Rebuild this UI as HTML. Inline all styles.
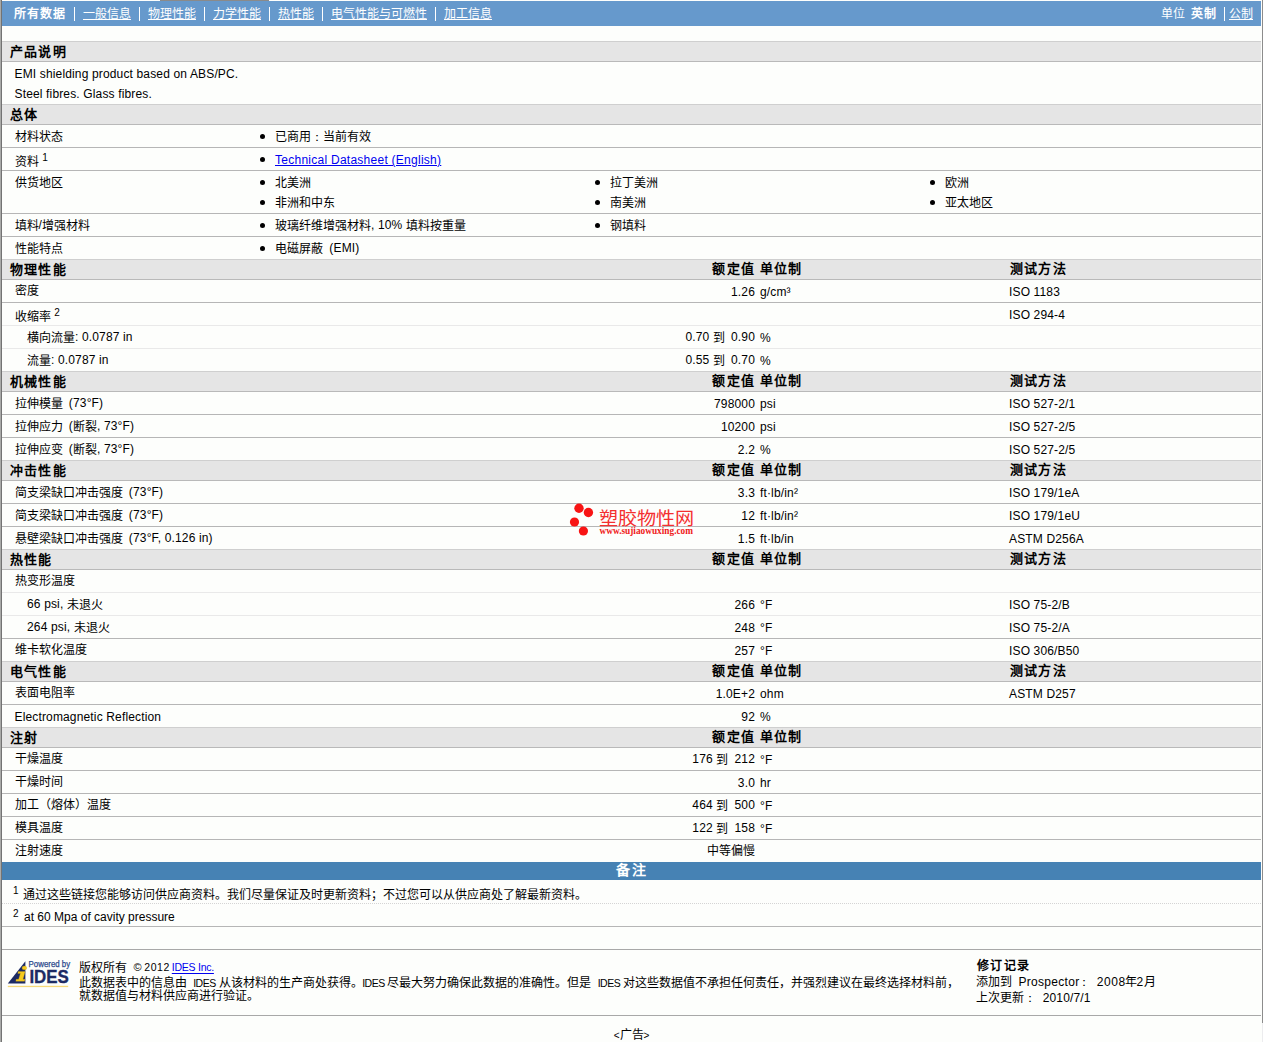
<!DOCTYPE html>
<html lang="zh-CN"><head><meta charset="utf-8"><title>Datasheet</title>
<style>
html,body{margin:0;padding:0}
body{width:1263px;height:1042px;background:#fdfefc;position:relative;overflow:hidden;font-family:"Liberation Sans",sans-serif;font-size:12px;color:#000}
div,span,a{box-sizing:border-box}
.abs{position:absolute}
#lb0{left:0;top:0;width:1px;height:1042px;background:#a9aaa8}
#lb1{left:1px;top:0;width:1px;height:1042px;background:#737373}
#rb{left:1262px;top:0;width:1px;height:1023px;background:#8c8c8c}
#rb2{left:1262px;top:1023px;width:1px;height:19px;background:#ececee}
#tg{left:160px;top:0;width:109px;height:1px;background:#8a8a8a}
#nav{left:2px;top:1px;width:1259px;height:25px;background:#6699cc;color:#fff;line-height:27px;white-space:nowrap}
#nav span,#nav a{position:absolute;top:0;color:#fff}
#nav a{text-decoration:underline}
#nav b{font-weight:bold;letter-spacing:1px}
#nav u{position:absolute;top:6px;width:1px;height:14px;background:#fff}
.h{position:absolute;left:2px;width:1259px;height:21px;background:#e5e5e5;border-top:1px solid #cfcfcf;border-bottom:1px solid #b9b9b9;line-height:19px;font-size:13px;font-weight:bold;white-space:nowrap}
.h span{position:absolute;top:0;letter-spacing:1.2px}
.h .l{left:8px}
.h .v{left:0;width:753px;text-align:right;top:-1px}
.h .u{left:758px;top:-1px}
.h .t{left:1008px;top:-1px}
.r{position:absolute;left:2px;width:1259px;height:23px;border-bottom:1px solid #b6b6b6;line-height:25px;white-space:nowrap}
.r.s{border-bottom-color:#e9e9e9}
.r.n{border-bottom:none;height:22px}
.r span,.r a{position:absolute;top:0}
.r .l{left:12.5px}
.r .l2{left:25px}
.r .v{left:0;width:753px;text-align:right}
.r .u{left:758px}
.r .t{left:1007px}
.r em{font-style:normal;position:relative;top:-1px;letter-spacing:.15px}
.r .e{letter-spacing:.15px}
.r s{display:inline-block;width:3px;text-decoration:none}
.r i{position:absolute;width:5px;height:5px;border-radius:50%;background:#000;top:9px}
sup{font-size:10px;margin-left:0.5px;vertical-align:baseline;position:relative;top:-5px;line-height:0;letter-spacing:0}
.f{position:absolute;line-height:14px;white-space:nowrap}
a{color:#0000f0;text-decoration:underline}
</style></head>
<body>
<div class="abs" id="lb0"></div><div class="abs" id="lb1"></div><div class="abs" id="rb"></div><div class="abs" id="rb2"></div><div class="abs" id="tg"></div>
<div class="abs" id="nav">
<span style="left:12px"><b>所有数据</b></span>
<u style="left:72px"></u>
<a style="left:81px">一般信息</a>
<u style="left:137px"></u>
<a style="left:146px">物理性能</a>
<u style="left:202px"></u>
<a style="left:211px">力学性能</a>
<u style="left:267px"></u>
<a style="left:276px">热性能</a>
<u style="left:320px"></u>
<a style="left:329px">电气性能与可燃性</a>
<u style="left:433px"></u>
<a style="left:442px">加工信息</a>
<span style="left:1159px">单位</span>
<span style="left:1189px"><b>英制</b></span>
<u style="left:1222px"></u>
<a style="left:1227px">公制</a>
</div>
<div class="h" style="top:41px"><span class="l">产品说明</span></div>
<div class="r n" style="top:62px;height:42px;line-height:20px"><span class="l e" style="top:2px">EMI shielding product based on ABS/PC.</span><span class="l e" style="top:22px">Steel fibres. Glass fibres.</span></div>
<div class="h" style="top:104px"><span class="l">总体</span></div>
<div class="r" style="top:125px"><span class="l">材料状态</span><i style="left:258px;top:9px"></i><span style="left:273px;top:0px">已商用<bdi lang="ja">：</bdi>当前有效</span></div>
<div class="r" style="top:148px"><span class="l" style="top:2px">资料 <sup>1</sup></span><i style="left:258px;top:9px"></i><span style="left:273px;top:0px"><a style="position:static;letter-spacing:0.26px">Technical Datasheet (English)</a></span></div>
<div class="r" style="top:171px;height:43px"><span class="l">供货地区</span><i style="left:258px;top:9px"></i><span style="left:273px;top:0px">北美洲</span><i style="left:593px;top:9px"></i><span style="left:608px;top:0px">拉丁美洲</span><i style="left:928px;top:9px"></i><span style="left:943px;top:0px">欧洲</span><i style="left:258px;top:29px"></i><span style="left:273px;top:20px">非洲和中东</span><i style="left:593px;top:29px"></i><span style="left:608px;top:20px">南美洲</span><i style="left:928px;top:29px"></i><span style="left:943px;top:20px">亚太地区</span></div>
<div class="r" style="top:214px"><span class="l">填料<em>/</em>增强材料</span><i style="left:258px;top:9px"></i><span style="left:273px;top:0px">玻璃纤维增强材料<em>, 10%</em> 填料按重量</span><i style="left:593px;top:9px"></i><span style="left:608px;top:0px">钢填料</span></div>
<div class="r n" style="top:237px"><span class="l">性能特点</span><i style="left:258px;top:9px"></i><span style="left:273px;top:0px">电磁屏蔽<s></s> <em>(EMI)</em></span></div>
<div class="h" style="top:259px"><span class="l">物理性能</span><span class="v">额定值</span><span class="u">单位制</span><span class="t">测试方法</span></div>
<div class="r" style="top:280px"><span class="l" style="top:-1px">密度</span><span class="v e">1.26</span><span class="u e">g/cm³</span><span class="t e">ISO 1183</span></div>
<div class="r s" style="top:303px"><span class="l"><span style="position:relative;top:2px">收缩率 <sup>2</sup></span></span><span class="t e">ISO 294-4</span></div>
<div class="r s" style="top:326px"><span class="l2">横向流量<em>: 0.0787 in</em></span><span class="v"><em>0.70</em> 到<s></s> <em>0.90</em></span><span class="u e">%</span></div>
<div class="r n" style="top:349px"><span class="l2">流量<em>: 0.0787 in</em></span><span class="v"><em>0.55</em> 到<s></s> <em>0.70</em></span><span class="u e">%</span></div>
<div class="h" style="top:371px"><span class="l">机械性能</span><span class="v">额定值</span><span class="u">单位制</span><span class="t">测试方法</span></div>
<div class="r" style="top:392px"><span class="l">拉伸模量<s></s> <em>(73°F)</em></span><span class="v e">798000</span><span class="u e">psi</span><span class="t e">ISO 527-2/1</span></div>
<div class="r" style="top:415px"><span class="l">拉伸应力<s></s> <em>(</em>断裂<em>, 73°F)</em></span><span class="v e">10200</span><span class="u e">psi</span><span class="t e">ISO 527-2/5</span></div>
<div class="r n" style="top:438px"><span class="l">拉伸应变<s></s> <em>(</em>断裂<em>, 73°F)</em></span><span class="v e">2.2</span><span class="u e">%</span><span class="t e">ISO 527-2/5</span></div>
<div class="h" style="top:460px"><span class="l">冲击性能</span><span class="v">额定值</span><span class="u">单位制</span><span class="t">测试方法</span></div>
<div class="r" style="top:481px"><span class="l">简支梁缺口冲击强度<s></s> <em>(73°F)</em></span><span class="v e">3.3</span><span class="u e">ft·lb/in²</span><span class="t e">ISO 179/1eA</span></div>
<div class="r" style="top:504px"><span class="l">简支梁缺口冲击强度<s></s> <em>(73°F)</em></span><span class="v e">12</span><span class="u e">ft·lb/in²</span><span class="t e">ISO 179/1eU</span></div>
<div class="r n" style="top:527px"><span class="l">悬壁梁缺口冲击强度<s></s> <em>(73°F, 0.126 in)</em></span><span class="v e">1.5</span><span class="u e">ft·lb/in</span><span class="t e">ASTM D256A</span></div>
<div class="h" style="top:549px"><span class="l">热性能</span><span class="v">额定值</span><span class="u">单位制</span><span class="t">测试方法</span></div>
<div class="r s" style="top:570px"><span class="l" style="top:-1px">热变形温度</span></div>
<div class="r s" style="top:593px"><span class="l2"><em>66 psi,</em> 未退火</span><span class="v e">266</span><span class="u e">°F</span><span class="t e">ISO 75-2/B</span></div>
<div class="r" style="top:616px"><span class="l2"><em>264 psi,</em> 未退火</span><span class="v e">248</span><span class="u e">°F</span><span class="t e">ISO 75-2/A</span></div>
<div class="r n" style="top:639px"><span class="l" style="top:-1px">维卡软化温度</span><span class="v e">257</span><span class="u e">°F</span><span class="t e">ISO 306/B50</span></div>
<div class="h" style="top:661px"><span class="l">电气性能</span><span class="v">额定值</span><span class="u">单位制</span><span class="t">测试方法</span></div>
<div class="r" style="top:682px"><span class="l" style="top:-1px">表面电阻率</span><span class="v e">1.0E+2</span><span class="u e">ohm</span><span class="t e">ASTM D257</span></div>
<div class="r n" style="top:705px"><span class="l e">Electromagnetic Reflection</span><span class="v e">92</span><span class="u e">%</span></div>
<div class="h" style="top:727px"><span class="l">注射</span><span class="v">额定值</span><span class="u">单位制</span></div>
<div class="r" style="top:748px"><span class="l" style="top:-1px">干燥温度</span><span class="v"><em>176</em> 到<s></s> <em>212</em></span><span class="u e">°F</span></div>
<div class="r" style="top:771px"><span class="l" style="top:-1px">干燥时间</span><span class="v e">3.0</span><span class="u e">hr</span></div>
<div class="r" style="top:794px"><span class="l" style="top:-1px">加工（熔体）温度</span><span class="v"><em>464</em> 到<s></s> <em>500</em></span><span class="u e">°F</span></div>
<div class="r" style="top:817px"><span class="l" style="top:-1px">模具温度</span><span class="v"><em>122</em> 到<s></s> <em>158</em></span><span class="u e">°F</span></div>
<div class="r n" style="top:840px"><span class="l" style="top:-1px">注射速度</span><span class="v" style="top:-1px">中等偏慢</span></div>
<div class="abs" style="left:2px;top:862px;width:1259px;height:18px;background:#4682b4;color:#fff;font-weight:bold;font-size:14px;line-height:16px;letter-spacing:1.5px;text-align:center">备注</div>
<div class="abs" style="left:2px;top:903px;width:1259px;height:1px;border-top:1px dotted #d4d4d4"></div>
<div class="abs" style="left:2px;top:926px;width:1259px;height:1px;background:#b6b6b6"></div>
<div class="f" style="left:13px;top:884px;font-size:10px">1</div>
<div class="f" style="left:22.5px;top:888px;">通过这些链接您能够访问供应商资料。我们尽量保证及时更新资料；不过您可以从供应商处了解最新资料。</div>
<div class="f" style="left:13px;top:907px;font-size:10px">2</div>
<div class="f" style="left:24px;top:910px;">at 60 Mpa of cavity pressure</div>
<div class="abs" style="left:2px;top:949px;width:1259px;height:1px;background:#a8a8a8"></div>
<div class="abs" style="left:2px;top:1015px;width:1259px;height:1px;background:#a8a8a8"></div>
<svg class="abs" style="left:6px;top:958px" width="68" height="32" viewBox="6 958 68 32">
<polygon points="7.8,983.6 25.4,961.2 25.4,983.6" fill="#1c2a63"/>
<text x="28.6" y="967" font-family="Liberation Sans, sans-serif" font-size="9" fill="#2b4a8c" stroke="#2b4a8c" stroke-width="0.25" textLength="41.6" lengthAdjust="spacingAndGlyphs">Powered by</text>
<text x="29.4" y="983.3" font-family="Liberation Sans, sans-serif" font-size="19" font-weight="bold" fill="#1c2a63" stroke="#1c2a63" stroke-width="0.35" textLength="39.4" lengthAdjust="spacingAndGlyphs">IDES</text>
<path d="M18.2 971.6 L25.2 971.6 L23 979.3 L25 979.3 L24.6 981.2 L15.8 981.2 L16.2 979.3 L18.6 979.3 L20.4 973.4 L17.8 973.4 Z" fill="#f6cb1e" stroke="#c99a10" stroke-width="0.3"/>
<ellipse cx="24.4" cy="967.9" rx="2.4" ry="1.9" fill="#f6cb1e" stroke="#c99a10" stroke-width="0.3"/>
<rect x="7.8" y="985.8" width="60.4" height="1.3" fill="#f6d978"/>
</svg>
<div class="f" style="left:79px;top:961px;">版权所有</div>
<div class="f" style="left:133.4px;top:960px;font-size:11px">©</div>
<div class="f" style="left:144.3px;top:960px;font-size:10.5px;letter-spacing:0.55px">2012</div>
<div class="f" style="left:171.8px;top:960px;font-size:10.5px;letter-spacing:-0.25px;color:#0000f0;text-decoration:underline;text-underline-offset:2px">IDES Inc.</div>
<div class="f" style="left:79px;top:976px;">此数据表中的信息由</div>
<div class="f" style="left:193.2px;top:976px;font-size:10.5px;letter-spacing:-0.5px">IDES</div>
<div class="f" style="left:218.7px;top:976px;">从该材料的生产商处获得。</div>
<div class="f" style="left:362.2px;top:976px;font-size:10.5px;letter-spacing:-0.5px">IDES</div>
<div class="f" style="left:387.4px;top:976px;">尽最大努力确保此数据的准确性。</div>
<div class="f" style="left:567px;top:976px;">但是</div>
<div class="f" style="left:597.7px;top:976px;font-size:10.5px;letter-spacing:-0.5px">IDES</div>
<div class="f" style="left:623px;top:976px;">对这些数据值不承担任何责任，并强烈建议在最终选择材料前，</div>
<div class="f" style="left:79px;top:989px;">就数据值与材料供应商进行验证。</div>
<div class="f" style="left:976.8px;top:959px;font-weight:bold;letter-spacing:1.5px">修订记录</div>
<div class="f" style="left:976.3px;top:975px;">添加到</div>
<div class="f" style="left:1018.5px;top:975px;letter-spacing:0.3px">Prospector</div>
<bdi lang="ja" class="f" style="left:1078px;top:975px;">：</bdi>
<div class="f" style="left:1096.7px;top:975px;letter-spacing:0.6px">2008</div>
<div class="f" style="left:1124.5px;top:975px;">年</div>
<div class="f" style="left:1136.6px;top:975px;">2</div>
<div class="f" style="left:1143.6px;top:975px;">月</div>
<div class="f" style="left:976.3px;top:991px;">上次更新<bdi lang="ja">：</bdi></div>
<div class="f" style="left:1042.7px;top:991px;letter-spacing:0.15px">2010/7/1</div>
<div class="abs" style="left:2px;top:1026px;width:1259px;text-align:center;line-height:18px"><span style="font-size:10px">&lt;</span>广告<span style="font-size:10px">&gt;</span></div>
<svg class="abs" style="left:565px;top:500px" width="135" height="40" viewBox="565 500 135 40">
<circle cx="579" cy="508.2" r="4.7" fill="#f81414"/><circle cx="588.4" cy="512.5" r="4.7" fill="#f81414"/><circle cx="574.5" cy="522" r="4.6" fill="#f81414"/><circle cx="583.4" cy="531" r="4.6" fill="#f81414"/>
<text x="599" y="525.3" font-size="18" fill="#f43030" font-family="Liberation Sans, sans-serif" font-weight="300" textLength="95.5" lengthAdjust="spacingAndGlyphs">塑胶物性网</text>
<text x="599.5" y="534" font-size="10" font-weight="bold" fill="#f02020" font-family="Liberation Serif, serif" textLength="93.5" lengthAdjust="spacingAndGlyphs">www.sujiaowuxing.com</text>
</svg>
</body></html>
